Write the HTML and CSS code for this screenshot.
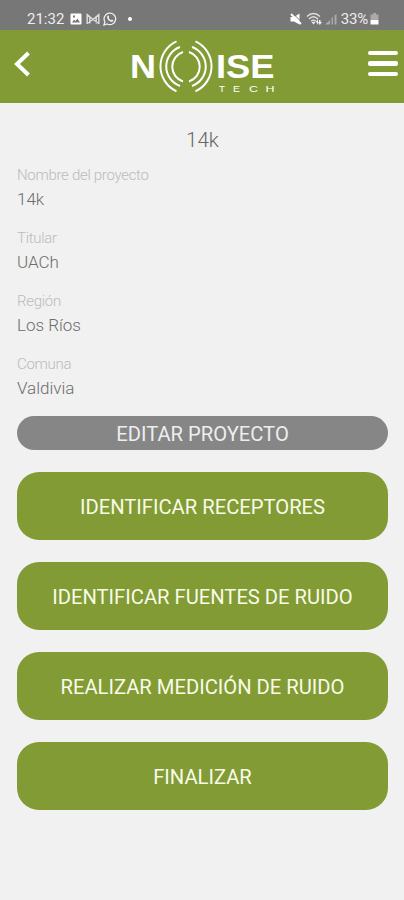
FILE: index.html
```html
<!DOCTYPE html>
<html lang="es">
<head>
  <meta charset="UTF-8">
  <meta name="viewport" content="width=device-width, initial-scale=1.0">
  <title>Noise Tech - Proyecto</title>
  <link rel="stylesheet" href="styles.css">
</head>
<body>

<div class="status-bar">
  <div class="status-left">
    <span class="clock">21:32</span>
    <svg class="icon-image" width="12" height="12" viewBox="0 0 12 12">
      <path fill="#fff" fill-rule="evenodd" d="M1.5 0.5h9a1 1 0 0 1 1 1v9a1 1 0 0 1-1 1h-9a1 1 0 0 1-1-1v-9a1 1 0 0 1 1-1zM2 9.5h8L7.5 5.5 5.5 8 4 6.5zM3 2.5v2h2v-2z"/>
    </svg>
    <svg class="icon-mail" width="14" height="12" viewBox="0 0 14 12">
      <path fill="none" stroke="#ddd" stroke-width="1.4" d="M1.2 11V1.5L7 6.5l5.8-5V11M3.8 10.5V4M10.2 10.5V4M1.2 10.5L7 6.5l5.8 4"/>
    </svg>
    <svg class="icon-whatsapp" width="14" height="14" viewBox="0 0 14 14">
      <path fill="none" stroke="#eee" stroke-width="1.3" d="M1 13l.9-3.2A5.8 5.8 0 1 1 4.2 12z"/>
      <path fill="#eee" d="M4.5 3.8c.8-.6 1.2-.2 1.7 1.2L5.7 6c.5 1 1.2 1.7 2.3 2.2l.9-.8c1.5.6 1.8.9 1.4 1.7-.8 1.2-2.5 1-4.3-.3C4.2 7.3 3.5 5 4.5 3.8z"/>
    </svg>
    <span class="dot"></span>
  </div>
  <div class="status-right">
    <svg class="icon-mute" width="12" height="12" viewBox="0 0 12 12">
      <path fill="#fff" d="M0.5 4h3.500L9.500 0.500v11L4 8.500H0.5z"/>
      <path stroke="#777" stroke-width="1" d="M2.500 0l9.500 9.500"/>
      <path stroke="#fff" stroke-width="1.800" d="M1 1l10 10"/>
    </svg>
    <svg class="icon-wifi" width="17" height="14" viewBox="0 0 17 14">
      <path fill="none" stroke="#ddd" stroke-width="1.5" d="M1 4.5c4-4 9-4 13 0M3 7c3-3 6-3 9 0M5.2 9.3c1.5-1.5 3-1.5 4.6 0"/>
      <path fill="#eee" d="M7.5 12.5l-2-2.5h4zM10 9.5l2-2.5v6zM13 8h1.5v2H16l-2.2 3-2-3H13z"/>
    </svg>
    <svg class="icon-signal" width="12" height="12" viewBox="0 0 12 12">
      <path fill="#aaa" d="M0 11.5L5 7v4.5zM6.5 5L8 4v7.5H6.5zM9.5 2.5l2-1.5v10.5h-2z"/>
    </svg>
    <span class="battery-text">33%</span>
    <svg class="icon-battery" width="9" height="12" viewBox="0 0 9 12">
      <path fill="#aaa" d="M3 0h3v1.5h2.5V7h-8V1.5H3z"/>
      <path fill="#fff" d="M0.5 7h8v4.5h-8z"/>
    </svg>
  </div>
</div>

<header>
  <a class="back" href="#" aria-label="Volver">
    <svg width="18" height="28" viewBox="0 0 18 28">
      <path fill="none" stroke="#fff" stroke-width="4" d="M15.5 3L4 14l11.5 11"/>
    </svg>
  </a>
  <svg class="logo" width="148" height="56" viewBox="128 38 148 56">
    <text class="logo-name" x="129" y="78" textLength="26" lengthAdjust="spacingAndGlyphs">N</text>
    <text class="logo-name" x="215" y="78" textLength="58.5" lengthAdjust="spacingAndGlyphs">ISE</text>
    <g class="waves">
      <path d="M175.500 41.300A27.500 27.500 0 0 0 175.500 91.300"/>
      <path d="M179 47A20.700 20.700 0 0 0 179 86"/>
      <path d="M182 52A15.500 15.500 0 0 0 182 81.500"/>
      <path d="M194.500 41.300A27.500 27.500 0 0 1 194.500 91.300"/>
      <path d="M191 47A20.700 20.700 0 0 1 191 86"/>
      <path d="M188 52A15.500 15.500 0 0 1 188 81.500"/>
    </g>
    <g class="logo-tech">
      <text x="218" y="91.5" textLength="6" lengthAdjust="spacingAndGlyphs">T</text>
      <text x="232" y="91.5" textLength="7" lengthAdjust="spacingAndGlyphs">E</text>
      <text x="248" y="91.5" textLength="9" lengthAdjust="spacingAndGlyphs">C</text>
      <text x="264.500" y="91.5" textLength="9" lengthAdjust="spacingAndGlyphs">H</text>
    </g>
  </svg>
  <a class="menu" href="#" aria-label="Menú">
    <span></span>
    <span></span>
    <span></span>
  </a>
</header>

<main>
  <h1>14k</h1>

  <div class="field">
    <label>Nombre del proyecto</label>
    <p>14k</p>
  </div>
  <div class="field">
    <label>Titular</label>
    <p>UACh</p>
  </div>
  <div class="field">
    <label>Región</label>
    <p>Los Ríos</p>
  </div>
  <div class="field">
    <label>Comuna</label>
    <p>Valdivia</p>
  </div>

  <div class="buttons">
    <button class="btn btn-edit">EDITAR PROYECTO</button>
    <button class="btn">IDENTIFICAR RECEPTORES</button>
    <button class="btn">IDENTIFICAR FUENTES DE RUIDO</button>
    <button class="btn">REALIZAR MEDICIÓN DE RUIDO</button>
    <button class="btn">FINALIZAR</button>
  </div>
</main>

</body>
</html>
```
FILE: styles.css
```css
* { box-sizing: border-box; }
body {
  font-family: Roboto, "Noto Sans", sans-serif;
  background-color: #f1f1f1;
  margin: 0;
  min-height: 900px;
}
.status-bar {
  display: flex;
  justify-content: space-between;
  height: 29.5px;
  padding: 7px 25px 0 27px;
  background-color: #777;
  color: #eee;
}
.status-left, .status-right {
  display: flex;
  align-items: center;
  height: 23px;
}
.clock { font-size: 15px; width: 43px; }
.icon-mail { margin-left: 4px; }
.icon-whatsapp { margin-left: 3px; }
.dot {
  width: 4px;
  height: 4px;
  margin-left: 11px;
  border-radius: 50%;
  background-color: #fff;
}
.icon-wifi { margin-left: 4px; }
.icon-signal { margin-left: 2px; }
.battery-text { font-size: 15px; margin-left: 4px; margin-right: 2px; letter-spacing: -0.2px; }
header {
  display: flex;
  align-items: center;
  justify-content: space-between;
  height: 73px;
  padding: 0 6px 0 13px;
  background-color: #829b35;
}
.back, .logo { display: block; }
.back { padding-bottom: 5px; }
.back svg { display: block; }
.logo { margin-left: 6px; }
.logo-name {
  font: bold 33px "Liberation Sans", Arial, sans-serif;
  fill: #fff;
}
.logo-tech {
  font: 9.5px "Liberation Sans", Arial, sans-serif;
  fill: #fff;
}
.waves {
  fill: none;
  stroke: #fff;
  stroke-width: 2;
}
.menu {
  display: flex;
  flex-direction: column;
  gap: 6px;
  padding-bottom: 5px;
}
.menu span {
  width: 30px;
  height: 4.5px;
  border-radius: 2px;
  background-color: #fff;
}
main { padding: 0 16px 0 17px; }
h1 {
  margin: 0;
  padding-top: 24px;
  font-size: 20.5px;
  font-weight: 300;
  line-height: 26px;
  text-align: center;
  color: #666;
}
.field { height: 63px; padding-top: 12px; }
.field label {
  display: block;
  font-size: 15px;
  font-weight: 300;
  line-height: 20px;
  letter-spacing: -0.3px;
  color: #bbb;
}
.field p {
  margin: 3px 0 0;
  font-size: 17px;
  font-weight: 300;
  line-height: 22px;
  color: #6c6c6c;
}
.buttons {
  display: flex;
  flex-direction: column;
  gap: 22.5px;
  padding-top: 11px;
}
.btn {
  height: 67.5px;
  padding: 2px 0 0;
  border: none;
  border-radius: 22px;
  background-color: #829b35;
  color: #f8fbe8;
  font-family: inherit;
  font-size: 20.2px;
  cursor: pointer;
}
.btn-edit {
  height: 34px;
  border-radius: 17px;
  background-color: #868686;
  color: #eee;
}
```
